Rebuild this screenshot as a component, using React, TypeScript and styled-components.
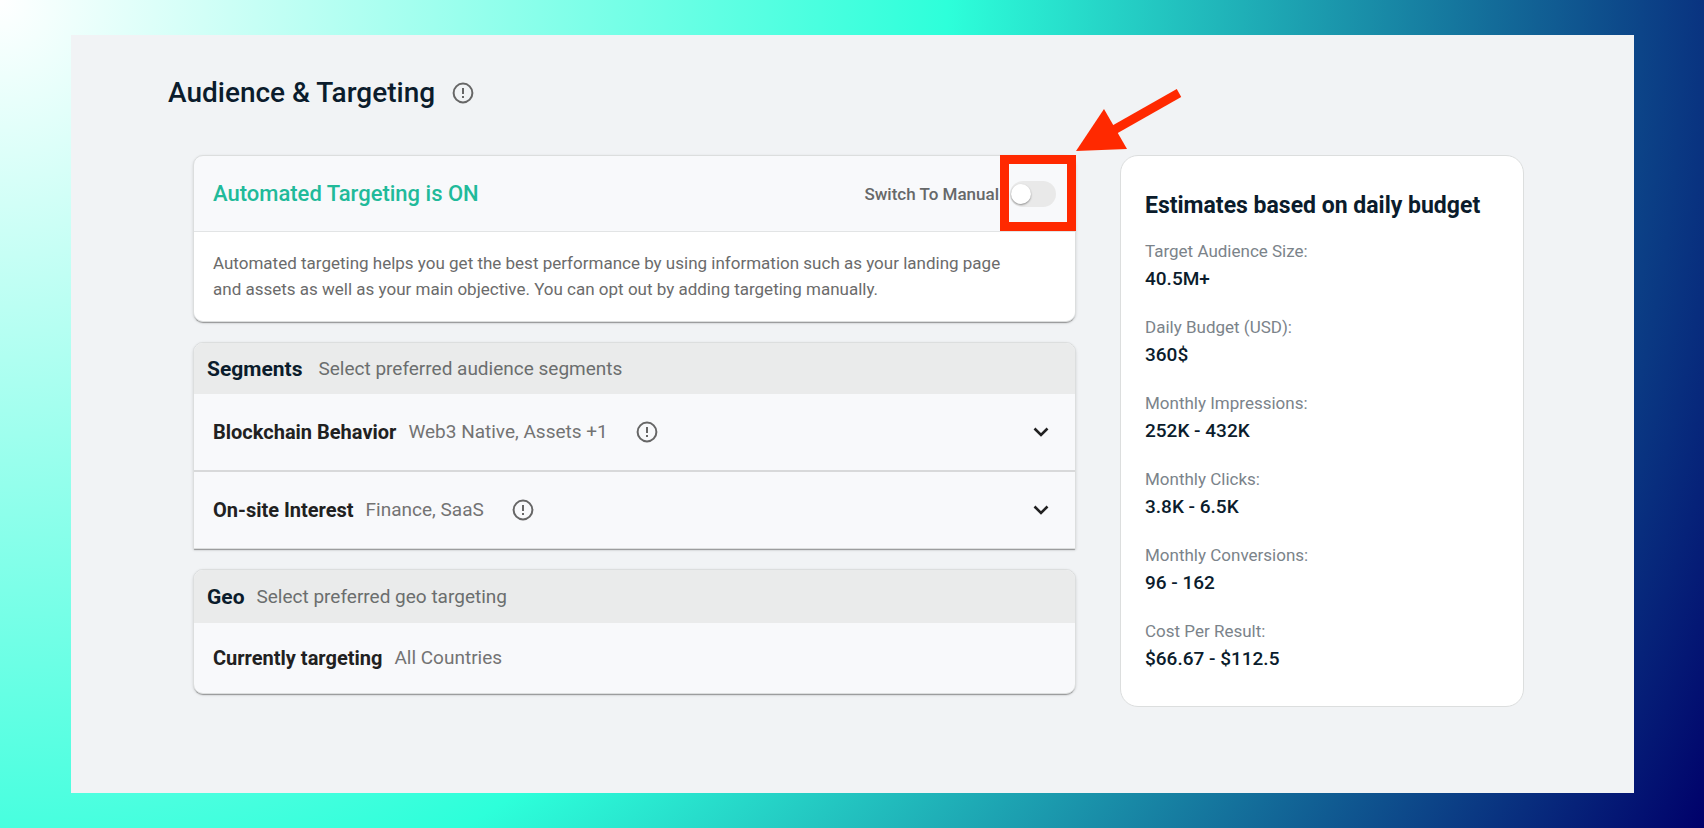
import React, { useState } from "react";
import styled, { createGlobalStyle } from "styled-components";

const GlobalStyle = createGlobalStyle`
  *, *::before, *::after { box-sizing: border-box; }
  body { margin: 0; font-family: Roboto, "Liberation Sans", sans-serif; color: #0b1c2c; }
  h1, h2, p, dl, dd { margin: 0; }
  button { font: inherit; }
`;

const Backdrop = styled.div`
  min-height: 100vh;
  display: flex;
  padding: 35px 70px 35px 71px;
  background: radial-gradient(circle farthest-corner at 0 0, #ffffff 0%, #2dffda 50%, #00006a 100%);
`;

const Page = styled.main`
  flex: 1;
  min-width: 0;
  padding: 40px 110px 40px 97px;
  background: #f1f3f5;
`;

const TitleBar = styled.header`
  display: flex;
  align-items: center;
  gap: 17px;
  height: 36px;
`;

const Title = styled.h1`
  font-size: 28px;
  line-height: 36px;
  font-weight: 500;
`;

const Columns = styled.div`
  display: grid;
  grid-template-columns: minmax(0, 883fr) minmax(0, 404fr);
  gap: 44px;
  align-items: start;
  margin-top: 44px;
  padding-left: 25px;
`;

const Stack = styled.div`
  display: flex;
  flex-direction: column;
  gap: 20px;
`;

const Card = styled.section<{ $square?: boolean }>`
  border: 1px solid #dcdede;
  border-radius: ${(p) => (p.$square ? "10px 10px 0 0" : "10px")};
  background: #f8f9fb;
  box-shadow: 0 2px 1px -1px rgba(0, 0, 0, 0.32), 0 1px 3px rgba(0, 0, 0, 0.14);
`;

const StatusBar = styled.div`
  display: flex;
  align-items: center;
  justify-content: space-between;
  height: 76px;
  padding: 0 19px;
  border-bottom: 1px solid #e2e4e5;
`;

const Status = styled.h2`
  font-size: 22px;
  line-height: 28px;
  font-weight: 500;
  color: #21ba9a;
`;

const SwitchLabel = styled.label`
  position: relative;
  display: flex;
  align-items: center;
  gap: 11px;
  font-size: 17px;
  font-weight: 500;
  color: #666869;
`;

const Switch = styled.input`
  appearance: none;
  width: 46px;
  height: 26px;
  margin: 0;
  padding: 3px 1px;
  border-radius: 13px;
  background: #e9e9e9;
  cursor: pointer;

  &::before {
    content: "";
    display: block;
    width: 20px;
    height: 20px;
    border-radius: 50%;
    background: #fff;
    box-shadow: 0 1px 2px rgba(0, 0, 0, 0.4);
  }

  &:checked { background: #21ba9a; }
  &:checked::before { margin-left: 24px; }
`;

const Highlight = styled.span`
  position: absolute;
  top: -26px;
  right: -20px;
  width: 76px;
  height: 76px;
  border: 9px solid #ff2900;
  pointer-events: none;
`;

const Arrow = styled.svg`
  position: absolute;
  right: -128px;
  bottom: 52px;
  width: 108px;
  height: 66px;
  pointer-events: none;
`;

const Description = styled.p`
  padding: 18px 48px 19px 19px;
  border-radius: 0 0 10px 10px;
  background: #fff;
  font-size: 17px;
  line-height: 26px;
  color: #6b6b6b;
`;

const SectionHeader = styled.div<{ $tall?: boolean }>`
  display: flex;
  align-items: center;
  gap: ${(p) => (p.$tall ? 12 : 16)}px;
  height: ${(p) => (p.$tall ? 53 : 51)}px;
  padding: 0 13px;
  border-radius: 9px 9px 0 0;
  background: #eaebeb;
  font-size: 19px;
  line-height: 26px;
  color: #6b6e6e;
`;

const SectionTitle = styled.h2`
  font-size: 21px;
  line-height: 26px;
  font-weight: 700;
  color: #0b1c2c;
`;

const Row = styled.div<{ $height: number }>`
  display: flex;
  align-items: center;
  gap: 12px;
  height: ${(p) => p.$height}px;
  padding: 0 24px 0 19px;
  font-size: 19px;
  line-height: 26px;
  color: #737373;

  & + & { border-top: 2px solid #d8d9da; }
`;

const RowName = styled.strong`
  font-size: 20px;
  font-weight: 700;
  color: #212121;
`;

const IconButton = styled.button<{ $push?: "end" | "gap" }>`
  display: flex;
  margin-left: ${(p) => (p.$push === "end" ? "auto" : p.$push === "gap" ? "16px" : "0")};
  padding: 0;
  border: 0;
  background: none;
  color: ${(p) => (p.$push === "end" ? "#212121" : "#666")};
  cursor: pointer;
`;

const EstimateCard = styled.aside`
  padding: 35px 24px 33px;
  border: 1px solid #dcdede;
  border-radius: 18px;
  background: #fff;
`;

const EstimateTitle = styled.h2`
  font-size: 23px;
  line-height: 30px;
  font-weight: 700;
`;

const EstimateList = styled.dl`
  display: flex;
  flex-direction: column;
  gap: 20px;
  margin-top: 16px;
`;

const Term = styled.dt`
  font-size: 17px;
  line-height: 28px;
  color: #7b838a;
`;

const Value = styled.dd`
  font-size: 19px;
  line-height: 28px;
  font-weight: 500;
`;

const InfoIcon = () => (
  <svg width="22" height="22" viewBox="0 0 22 22" fill="none" stroke="currentColor" strokeWidth="2" aria-hidden="true">
    <circle cx="11" cy="11" r="9.4" />
    <path d="M11 6v6M11 14v2" />
  </svg>
);

const Chevron = () => (
  <svg width="20" height="20" viewBox="0 0 20 20" fill="none" stroke="currentColor" strokeWidth="2.6" aria-hidden="true">
    <path d="M3.500 6.500 10 13l6.500-6.500" />
  </svg>
);

const segments = [
  { name: "Blockchain Behavior", value: "Web3 Native, Assets +1", height: 76 },
  { name: "On-site Interest", value: "Finance, SaaS", height: 78 },
];

const estimates = [
  ["Target Audience Size:", "40.5M+"],
  ["Daily Budget (USD):", "360$"],
  ["Monthly Impressions:", "252K - 432K"],
  ["Monthly Clicks:", "3.8K - 6.5K"],
  ["Monthly Conversions:", "96 - 162"],
  ["Cost Per Result:", "$66.67 - $112.5"],
];

export default function App() {
  const [manual, setManual] = useState(false);

  return (
    <>
      <GlobalStyle />
      <Backdrop>
        <Page>
          <TitleBar>
            <Title>Audience &amp; Targeting</Title>
            <IconButton type="button" aria-label="About audience and targeting">
              <InfoIcon />
            </IconButton>
          </TitleBar>
          <Columns>
            <Stack>
              <Card>
                <StatusBar>
                  <Status>Automated Targeting is ON</Status>
                  <SwitchLabel>
                    Switch To Manual
                    <Switch type="checkbox" role="switch" checked={manual} onChange={(e) => setManual(e.target.checked)} />
                    <Highlight />
                    <Arrow viewBox="0 0 108 66" aria-hidden="true">
                      <path d="M103 4 36 42" stroke="#ff2900" strokeWidth="9" />
                      <path d="M0 62 28 20 51 60z" fill="#ff2900" />
                    </Arrow>
                  </SwitchLabel>
                </StatusBar>
                <Description>
                  Automated targeting helps you get the best performance by using information such as your landing page
                  and assets as well as your main objective. You can opt out by adding targeting manually.
                </Description>
              </Card>

              <Card $square>
                <SectionHeader>
                  <SectionTitle>Segments</SectionTitle>
                  <span>Select preferred audience segments</span>
                </SectionHeader>
                {segments.map((s) => (
                  <Row key={s.name} $height={s.height}>
                    <RowName>{s.name}</RowName>
                    <span>{s.value}</span>
                    <IconButton type="button" $push="gap" aria-label={`About ${s.name}`}>
                      <InfoIcon />
                    </IconButton>
                    <IconButton type="button" $push="end" aria-label={`Expand ${s.name}`}>
                      <Chevron />
                    </IconButton>
                  </Row>
                ))}
              </Card>

              <Card>
                <SectionHeader $tall>
                  <SectionTitle>Geo</SectionTitle>
                  <span>Select preferred geo targeting</span>
                </SectionHeader>
                <Row $height={70}>
                  <RowName>Currently targeting</RowName>
                  <span>All Countries</span>
                </Row>
              </Card>
            </Stack>

            <EstimateCard>
              <EstimateTitle>Estimates based on daily budget</EstimateTitle>
              <EstimateList>
                {estimates.map(([term, value]) => (
                  <div key={term}>
                    <Term>{term}</Term>
                    <Value>{value}</Value>
                  </div>
                ))}
              </EstimateList>
            </EstimateCard>
          </Columns>
        </Page>
      </Backdrop>
    </>
  );
}
